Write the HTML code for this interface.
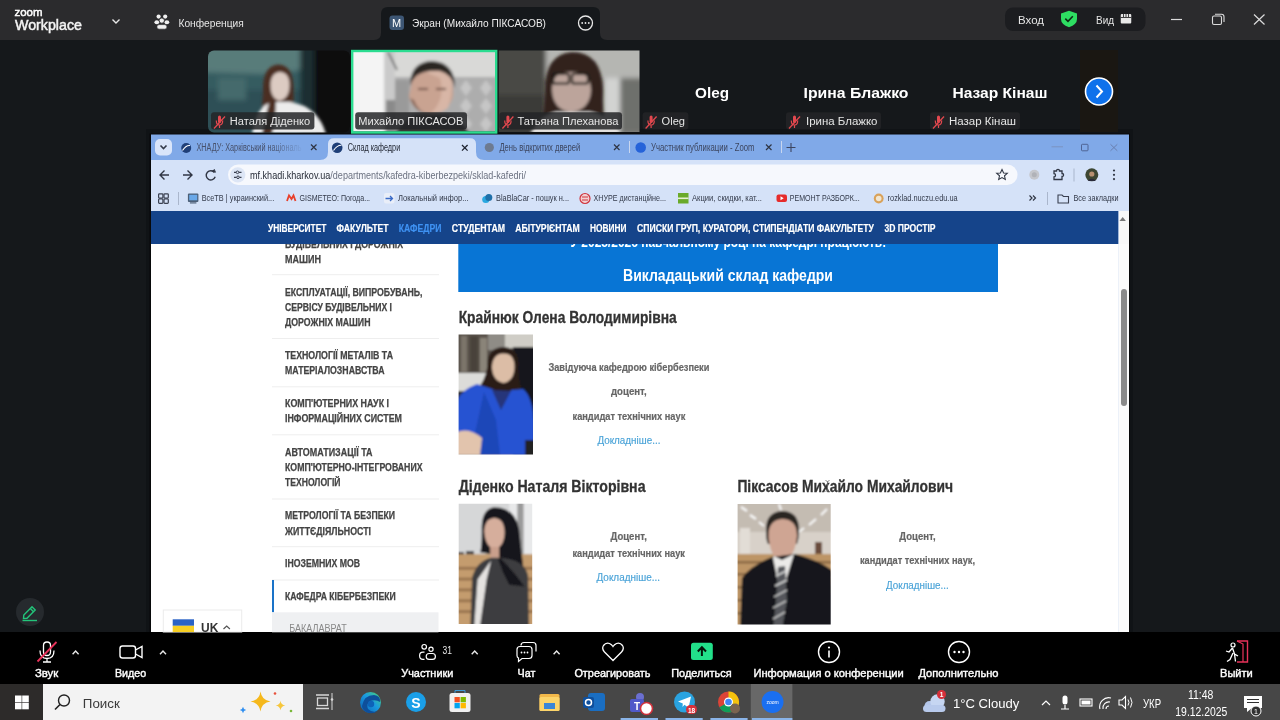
<!DOCTYPE html>
<html><head><meta charset="utf-8"><title>Zoom</title>
<style>html,body{margin:0;padding:0;background:#15181b;overflow:hidden;width:1280px;height:720px}
svg{display:block;will-change:transform}text{font-family:"Liberation Sans",sans-serif}</style></head>
<body><svg width="1280" height="720" viewBox="0 0 1280 720">
<defs>
<linearGradient id="g_t1" x1="0" y1="0" x2="0" y2="1"><stop offset="0" stop-color="#5f8482"/><stop offset="0.5" stop-color="#3b6367"/><stop offset="1" stop-color="#2c4d55"/></linearGradient>
<linearGradient id="g_t1r" x1="0" y1="0" x2="1" y2="0"><stop offset="0" stop-color="#000" stop-opacity="0"/><stop offset="0.6" stop-color="#050505" stop-opacity="1"/></linearGradient>
<linearGradient id="g_t3" x1="0" y1="0" x2="1" y2="0"><stop offset="0" stop-color="#4a4c4a"/><stop offset="0.5" stop-color="#7d7f7e"/><stop offset="1" stop-color="#b5b6b5"/></linearGradient>
<linearGradient id="g_t2" x1="0" y1="0" x2="1" y2="0"><stop offset="0" stop-color="#f2f2f2"/><stop offset="0.22" stop-color="#e9e9e9"/><stop offset="0.3" stop-color="#b5b5b5"/><stop offset="1" stop-color="#9c9c9c"/></linearGradient>
</defs>
<rect x="0" y="0" width="1280" height="40" fill="#2b2b2d" />
<text x="14.5" y="16" font-size="11" font-weight="normal" fill="#ffffff" text-anchor="start" font-family="Liberation Sans" textLength="28" lengthAdjust="spacingAndGlyphs" stroke="#fff" stroke-width="0.45">zoom</text>
<text x="15" y="30.3" font-size="14" font-weight="normal" fill="#f4f4f4" text-anchor="start" font-family="Liberation Sans" textLength="67" lengthAdjust="spacingAndGlyphs" stroke="#f4f4f4" stroke-width="0.45">Workplace</text>
<path d="M112.5 19.5 L116 23 L119.5 19.5" fill="none" stroke="#e8e8e8" stroke-width="1.4" />
<text x="178.5" y="26.9" font-size="11" font-weight="normal" fill="#e6e6e6" text-anchor="start" font-family="Liberation Sans" textLength="65.3" lengthAdjust="spacingAndGlyphs" >Конференция</text>
<circle cx="158.6" cy="16.6" r="2.1" fill="#f0f0f0" />
<circle cx="165.2" cy="16.6" r="2.1" fill="#f0f0f0" />
<ellipse cx="156.8" cy="22.3" rx="2.4" ry="2" fill="#f0f0f0"/><ellipse cx="166.9" cy="22.3" rx="2.4" ry="2" fill="#f0f0f0"/>
<circle cx="161.8" cy="20.6" r="2.6" fill="#f0f0f0" stroke="#2b2b2d" stroke-width="0.8" />
<rect x="156.8" y="24.6" width="10.2" height="4.6" fill="#f0f0f0" rx="2.3" stroke="#2b2b2d" stroke-width="0.7"/>
<path d="M374 40 Q381 40 381 33 L381 14 Q381 7 388 7 L593 7 Q600 7 600 14 L600 33 Q600 40 607 40 Z" fill="#15181b" />
<rect x="389.5" y="15.5" width="14.5" height="14.5" fill="#3d5674" rx="3" />
<text x="396.7" y="27" font-size="11" font-weight="normal" fill="#ffffff" text-anchor="middle" font-family="Liberation Sans" >M</text>
<text x="412" y="27" font-size="11.5" font-weight="normal" fill="#eeeeee" text-anchor="start" font-family="Liberation Sans" textLength="134" lengthAdjust="spacingAndGlyphs" >Экран (Михайло ПІКСАСОВ)</text>
<circle cx="585.5" cy="23" r="7" fill="none" stroke="#e8e8e8" stroke-width="1.3" />
<circle cx="582.2" cy="23" r="0.9" fill="#e8e8e8" />
<circle cx="585.5" cy="23" r="0.9" fill="#e8e8e8" />
<circle cx="588.8" cy="23" r="0.9" fill="#e8e8e8" />
<rect x="1005" y="7.5" width="140.5" height="23.5" fill="#1c1d20" rx="8" />
<text x="1018" y="23.9" font-size="11.5" font-weight="normal" fill="#e6e6e6" text-anchor="start" font-family="Liberation Sans" textLength="26" lengthAdjust="spacingAndGlyphs" >Вход</text>
<path d="M1069 10.8 L1077 13.5 L1077 19 Q1077 24.5 1069 27.2 Q1061 24.5 1061 19 L1061 13.5 Z" fill="#2ede62" />
<path d="M1065.3 18.6 L1068 21.3 L1072.8 16.3" fill="none" stroke="#0d2a14" stroke-width="1.6" />
<text x="1096" y="23.9" font-size="11.5" font-weight="normal" fill="#e6e6e6" text-anchor="start" font-family="Liberation Sans" textLength="18" lengthAdjust="spacingAndGlyphs" >Вид</text>
<rect x="1120.75" y="14" width="10.5" height="9.5" fill="#e8e8e8" rx="1" />
<path d="M1123.5 14 L1123.5 17 M1126 14 L1126 17 M1128.5 14 L1128.5 17 M1120.75 17.5 L1131.25 17.5" fill="none" stroke="#2b2b2d" stroke-width="0.9" />
<path d="M1171 19.5 L1182 19.5" fill="none" stroke="#dcdcdc" stroke-width="1.2" />
<rect x="1212.5" y="16" width="9" height="8.5" fill="none" rx="1.5" stroke="#dcdcdc" stroke-width="1.1"/>
<path d="M1215 14.2 L1221.5 14.2 Q1224 14.2 1224 16.7 L1224 22" fill="none" stroke="#dcdcdc" stroke-width="1.1" />
<path d="M1254 14.5 L1264.5 24.5 M1264.5 14.5 L1254 24.5" fill="none" stroke="#dcdcdc" stroke-width="1.2" />
<rect x="0" y="40" width="1280" height="592" fill="#15181b" />
<rect x="146" y="129" width="987" height="503" fill="#101316" />
<rect x="149.5" y="133.5" width="980.5" height="498.5" fill="#08090a" />
<filter id="bl3" x="-10%" y="-10%" width="120%" height="120%"><feGaussianBlur stdDeviation="1.6"/></filter>
<clipPath id="cp_v1"><rect x="208" y="50.4" width="142" height="82" rx="6"/></clipPath>
<g clip-path="url(#cp_v1)"><g filter="url(#bl2)">
<rect x="200" y="45" width="160" height="95" fill="#355c61" />
<path d="M200 45 L330 45 L318 60 Q300 75 260 74 L200 72 Z" fill="#587c7a" />
<rect x="200" y="90" width="100" height="45" fill="#2d4f56" />
<rect x="218" y="78" width="28" height="22" fill="#446a6c" />
<rect x="312" y="45" width="48" height="95" fill="#0c0908" />
<rect x="300" y="45" width="14" height="95" fill="#1d2d30" />
</g></g>
<g clip-path="url(#cp_v1)"><g filter="url(#bl3)">
<path d="M278 64.5 Q262 66 263 92 Q262 116 258 133 L300 133 Q293 112 293.5 90 Q294 65 278 64.5 Z" fill="#4c2f24" />
<path d="M279.5 72 Q270.5 73 270.5 86 Q271 99 279.5 101 Q289 99 289.5 86 Q289.5 72 279.5 72 Z" fill="#dccbc2" />
<path d="M252 134 Q256 106 272 102 L290 102 Q318 106 326 134 Z" fill="#ececec" />
<path d="M262 134 Q266 112 270 100 L276 100 Q276 118 272 134 Z" fill="#4c2f24" />
</g></g>
<clipPath id="cp_v2"><rect x="352.2" y="51" width="144" height="80.5"/></clipPath>
<g clip-path="url(#cp_v2)"><g filter="url(#bl3)">
<rect x="345" y="45" width="160" height="95" fill="#adadad" />
<rect x="345" y="45" width="160" height="32" fill="#d9d9d7" />
<rect x="345" y="45" width="40" height="95" fill="#f4f4f4" />
<rect x="384" y="45" width="11" height="95" fill="#cacaca" />
<rect x="386" y="100" width="10" height="35" fill="#8a8a8a" />
<path d="M388 52 L397 70" fill="none" stroke="#3a3a3a" stroke-width="1.5" />
<path d="M466 80 L472 88 L466 96 L460 88 Z" fill="#c6c6c6" />
<path d="M466 98 L472 106 L466 114 L460 106 Z" fill="#c6c6c6" />
<path d="M466 116 L472 124 L466 132 L460 124 Z" fill="#c6c6c6" />
<path d="M486 80 L492 88 L486 96 L480 88 Z" fill="#c6c6c6" />
<path d="M486 98 L492 106 L486 114 L480 106 Z" fill="#c6c6c6" />
<path d="M486 116 L492 124 L486 132 L480 124 Z" fill="#c6c6c6" />
<rect x="395" y="80" width="14" height="55" fill="#9a9a9a" />
<path d="M431 63 Q414 64 412 82 L409 96 Q411 110 430 114 Q450 111 453 96 Q455 64 431 63 Z" fill="#c9a391" />
<path d="M420 70 Q438 66 452 78 Q452 96 448 108 Q440 114 430 114 Q446 100 440 78 Z" fill="#d8b6a6" />
<path d="M410 98 Q414 112 430 115 Q418 112 414 100 Z" fill="#8a6a5c" />
<path d="M410 86 Q410 62 432 61 Q455 62 455 88 Q452 74 440 71 Q424 70 416 76 Q412 80 410 86 Z" fill="#2a2524" />
<path d="M418 89 L428 89 M436 89 L446 89" fill="none" stroke="#6a4c40" stroke-width="2.2" />
<path d="M395 134 Q402 120 416 114 L448 114 Q462 120 470 134 Z" fill="#3a3836" />
</g></g>
<rect x="352.2" y="51" width="144" height="81.5" fill="none" stroke="#2bdc90" stroke-width="2.4"/>
<clipPath id="cp_v3"><rect x="498.8" y="50.4" width="140.7" height="81.6"/></clipPath>
<g clip-path="url(#cp_v3)"><g filter="url(#bl2)">
<rect x="490" y="45" width="160" height="95" fill="#8c8d8a" />
<rect x="490" y="45" width="160" height="33" fill="#b5b6b2" />
<rect x="490" y="45" width="56" height="95" fill="#4a4a45" />
<rect x="490" y="95" width="56" height="40" fill="#3b3b37" />
<rect x="604" y="78" width="16" height="55" fill="#d2d3d1" />
<rect x="620" y="78" width="25" height="55" fill="#6e6f6c" />
</g></g>
<g clip-path="url(#cp_v3)"><g filter="url(#bl3)">
<path d="M572 52 Q545 54 545 90 Q544 112 540 134 L606 134 Q602 112 603 90 Q602 52 572 52 Z" fill="#30241f" />
<path d="M571 69.5 Q552 71 552 90 Q553 110 571 112 Q590 110 591 90 Q590 69.5 571 69.5 Z" fill="#bca49b" />
<path d="M550 80 Q552 66 571 65 Q592 66 593 80 Q582 72 571 72 Q560 72 550 80 Z" fill="#30241f" />
<rect x="553" y="74" width="16" height="9.5" fill="none" rx="2" stroke="#141210" stroke-width="2.2"/>
<rect x="572" y="74" width="16" height="9.5" fill="none" rx="2" stroke="#141210" stroke-width="2.2"/>
<path d="M530 134 Q540 116 556 112 L590 112 Q610 116 620 134 Z" fill="#e2e0de" />
</g></g>
<text x="712" y="97.5" font-size="15" font-weight="bold" fill="#ffffff" text-anchor="middle" font-family="Liberation Sans" textLength="34" lengthAdjust="spacingAndGlyphs" >Oleg</text>
<text x="856" y="97.5" font-size="15" font-weight="bold" fill="#ffffff" text-anchor="middle" font-family="Liberation Sans" textLength="105" lengthAdjust="spacingAndGlyphs" >Ірина Блажко</text>
<text x="1000" y="97.5" font-size="15" font-weight="bold" fill="#ffffff" text-anchor="middle" font-family="Liberation Sans" textLength="95" lengthAdjust="spacingAndGlyphs" >Назар Кінаш</text>
<rect x="1080" y="50" width="38" height="82" fill="#1a1712" />
<circle cx="1099" cy="91.5" r="13.5" fill="#0e71eb" stroke="#ffffff" stroke-width="1.6" />
<path d="M1096.5 85.5 L1102 91.5 L1096.5 97.5" fill="none" stroke="#ffffff" stroke-width="2" />
<rect x="151" y="134.5" width="978" height="497.5" fill="#80a9e8" />
<rect x="151" y="160" width="978" height="51" fill="#d5e2f8" />
<rect x="151" y="211" width="967.5" height="33" fill="#15448a" />
<rect x="151" y="244" width="967.5" height="388" fill="#ffffff" />
<rect x="1118.5" y="211" width="10.5" height="421" fill="#f8f8f8" />
<rect x="0" y="632" width="1280" height="52" fill="#000000" />
<rect x="0" y="684" width="1280" height="36" fill="#474747" />
<rect x="0" y="684" width="43" height="36" fill="#2d2b2a" />
<rect x="43" y="684" width="260" height="36" fill="#f3f3f3" />
<rect x="155" y="139" width="17" height="16.5" fill="#d9e5fa" rx="5" />
<path d="M160.5 145.5 L163.5 148.5 L166.5 145.5" fill="none" stroke="#333a4a" stroke-width="1.6" />
<circle cx="186.2" cy="148" r="5" fill="#1f3f78" />
<path d="M182.5 150.5 Q186 145 190 145.5" fill="none" stroke="#ffffff" stroke-width="1.1" />
<text x="196.5" y="151" font-size="10" font-weight="normal" fill="#46506a" text-anchor="start" font-family="Liberation Sans" textLength="105" lengthAdjust="spacingAndGlyphs" >ХНАДУ: Харківський національ</text>
<linearGradient id="g_fade" x1="0" y1="0" x2="1" y2="0"><stop offset="0" stop-color="#80a9e8" stop-opacity="0"/><stop offset="1" stop-color="#80a9e8" stop-opacity="1"/></linearGradient>
<rect x="270" y="138" width="34" height="20" fill="url(#g_fade)" />
<path d="M311 144.5 L316.5 150 M316.5 144.5 L311 150" fill="none" stroke="#2e3544" stroke-width="1.2" />
<path d="M320 160 Q328 160 328 152 L328 144 Q328 138.2 334 138.2 L470 138.2 Q476 138.2 476 144 L476 152 Q476 160 484 160 Z" fill="#d5e2f8" />
<circle cx="337.2" cy="147.7" r="5.3" fill="#1f3f78" />
<path d="M333.5 150.5 Q337 145 341.5 145.2" fill="none" stroke="#ffffff" stroke-width="1.1" />
<text x="347.7" y="151.2" font-size="10" font-weight="normal" fill="#1f2430" text-anchor="start" font-family="Liberation Sans" textLength="52.5" lengthAdjust="spacingAndGlyphs" >Склад кафедри</text>
<path d="M462 145 L467.6 150.6 M467.6 145 L462 150.6" fill="none" stroke="#1f2430" stroke-width="1.3" />
<circle cx="489.3" cy="147.5" r="4.6" fill="#6d7a90" />
<text x="499.4" y="151" font-size="10" font-weight="normal" fill="#3c4660" text-anchor="start" font-family="Liberation Sans" textLength="81" lengthAdjust="spacingAndGlyphs" >День відкритих дверей</text>
<path d="M614 144.5 L619.5 150 M619.5 144.5 L614 150" fill="none" stroke="#2e3544" stroke-width="1.2" />
<rect x="629" y="141" width="1" height="12" fill="#c8d6ef" />
<circle cx="640.7" cy="147.5" r="5.3" fill="#2563d9" />
<text x="651" y="151" font-size="10" font-weight="normal" fill="#3c4660" text-anchor="start" font-family="Liberation Sans" textLength="103.5" lengthAdjust="spacingAndGlyphs" >Участник публикации - Zoom</text>
<path d="M766 144.5 L771.5 150 M771.5 144.5 L766 150" fill="none" stroke="#2e3544" stroke-width="1.2" />
<rect x="781" y="141" width="1" height="12" fill="#c8d6ef" />
<path d="M791 143 L791 152 M786.5 147.5 L795.5 147.5" fill="none" stroke="#3c4660" stroke-width="1.1" />
<path d="M1051.5 146.8 L1063 146.8" fill="none" stroke="#7b93c0" stroke-width="1" />
<rect x="1081.5" y="144.3" width="6.5" height="6.5" fill="none" rx="0.8" stroke="#4f6494" stroke-width="1"/>
<path d="M1110.5 144.3 L1117.3 150.8 M1117.3 144.3 L1110.5 150.8" fill="none" stroke="#6a80b0" stroke-width="1" />
<path d="M160 175 L169 175 M164.5 170.5 L160 175 L164.5 179.5" fill="none" stroke="#303644" stroke-width="1.4" />
<path d="M183 175 L192 175 M187.5 170.5 L192 175 L187.5 179.5" fill="none" stroke="#303644" stroke-width="1.4" />
<path d="M214.5 172.5 A4.6 4.6 0 1 0 215.2 176.8" fill="none" stroke="#303644" stroke-width="1.4" />
<path d="M212.2 170.8 L215.5 172.3 L214.3 169.2" fill="#303644" stroke="#303644" stroke-width="0.8" />
<rect x="228" y="164.5" width="789.5" height="20.5" fill="#f6f8fd" rx="10.25" />
<circle cx="237.8" cy="174.8" r="7.6" fill="#dde6f6" />
<path d="M234 172.3 L236 172.3 M239 172.3 L241.5 172.3 M234 177.3 L236.5 177.3 M239.5 177.3 L241.5 177.3" fill="none" stroke="#3a4050" stroke-width="1.2" />
<circle cx="237.5" cy="172.3" r="1.3" fill="none" stroke="#3a4050" stroke-width="1" />
<circle cx="238" cy="177.3" r="1.3" fill="none" stroke="#3a4050" stroke-width="1" />
<text x="250" y="178.8" font-size="10.5" font-family="Liberation Sans" textLength="276" lengthAdjust="spacingAndGlyphs"><tspan fill="#1f2430">mf.khadi.kharkov.ua</tspan><tspan fill="#6b7180">/departments/kafedra-kiberbezpeki/sklad-kafedri/</tspan></text>
<path d="M1002 169.5 L1003.6 173 L1007.3 173.3 L1004.5 175.8 L1005.3 179.5 L1002 177.6 L998.7 179.5 L999.5 175.8 L996.7 173.3 L1000.4 173 Z" fill="none" stroke="#303644" stroke-width="1.1" />
<circle cx="1034.3" cy="174.8" r="5" fill="#c4c6cc" />
<circle cx="1034.3" cy="174.8" r="2.5" fill="#b0b2b8" />
<path d="M1054 171 L1056.5 171 Q1056.5 169.3 1058 169.3 Q1059.5 169.3 1059.5 171 L1062 171 L1062 173.5 Q1063.6 173.5 1063.6 175 Q1063.6 176.5 1062 176.5 L1062 179.5 L1054 179.5 L1054 177 Q1055.5 177 1055.5 175.3 Q1055.5 173.6 1054 173.6 Z" fill="none" stroke="#303644" stroke-width="1.3" />
<rect x="1073.5" y="168.5" width="1" height="13" fill="#aab6cc" />
<circle cx="1091.8" cy="174.8" r="6.5" fill="#3d4632" />
<circle cx="1091.8" cy="174" r="2.6" fill="#b89070" />
<path d="M1087.5 181 Q1091.8 176.5 1096 181" fill="#2a2a3a" />
<circle cx="1114" cy="170.5" r="1.1" fill="#303644" />
<circle cx="1114" cy="174.8" r="1.1" fill="#303644" />
<circle cx="1114" cy="179.1" r="1.1" fill="#303644" />
<rect x="158.6" y="193.8" width="4.3" height="4.3" fill="none" rx="0.8" stroke="#3a4050" stroke-width="1.2"/>
<rect x="164" y="193.8" width="4.3" height="4.3" fill="none" rx="0.8" stroke="#3a4050" stroke-width="1.2"/>
<rect x="158.6" y="199" width="4.3" height="4.3" fill="none" rx="0.8" stroke="#3a4050" stroke-width="1.2"/>
<rect x="164" y="199" width="4.3" height="4.3" fill="none" rx="0.8" stroke="#3a4050" stroke-width="1.2"/>
<rect x="178" y="192" width="1" height="13" fill="#aab6cc" />
<rect x="187.9" y="193.5" width="10.5" height="8.5" fill="#4d6078" rx="1" />
<rect x="189.20000000000002" y="194.8" width="8" height="5.5" fill="#6aa8e8" />
<rect x="189.9" y="202.3" width="6.5" height="1.2" fill="#4d6078" />
<text x="201.7" y="201.3" font-size="9.5" font-weight="normal" fill="#333a4a" text-anchor="start" font-family="Liberation Sans" textLength="72.5" lengthAdjust="spacingAndGlyphs" >ВсеТВ | украинский...</text>
<path d="M287 201 L289 195.5 L291.5 199 L293.5 195.5 L295.5 201" fill="none" stroke="#e8402b" stroke-width="1.8" />
<text x="299.6" y="201.3" font-size="9.5" font-weight="normal" fill="#333a4a" text-anchor="start" font-family="Liberation Sans" textLength="70.5" lengthAdjust="spacingAndGlyphs" >GISMETEO: Погода...</text>
<rect x="384" y="193" width="10.5" height="10.5" fill="#e9eef8" rx="2" />
<path d="M385.5 198.5 L392.5 198.5 M390 196 L392.5 198.5 L390 201" fill="none" stroke="#3a6bc8" stroke-width="1.3" />
<text x="398" y="201.3" font-size="9.5" font-weight="normal" fill="#333a4a" text-anchor="start" font-family="Liberation Sans" textLength="70.5" lengthAdjust="spacingAndGlyphs" >Локальный инфор...</text>
<circle cx="485.8" cy="199.5" r="3.6" fill="#2aa8e0" />
<circle cx="488.8" cy="197.5" r="3.5" fill="#1f6fa8" />
<text x="496" y="201.3" font-size="9.5" font-weight="normal" fill="#333a4a" text-anchor="start" font-family="Liberation Sans" textLength="73" lengthAdjust="spacingAndGlyphs" >BlaBlaCar - пошук н...</text>
<circle cx="585" cy="198.5" r="5" fill="#f3d2d4" stroke="#d0353f" stroke-width="1.2" />
<path d="M582 197 L588 197 M582 200 L588 200" fill="none" stroke="#d0353f" stroke-width="1" />
<text x="593.5" y="201.3" font-size="9.5" font-weight="normal" fill="#333a4a" text-anchor="start" font-family="Liberation Sans" textLength="72.5" lengthAdjust="spacingAndGlyphs" >ХНУРЕ дистанційне...</text>
<rect x="678" y="193" width="10.5" height="10.5" fill="#6aaa2a" />
<rect x="678" y="197.5" width="10.5" height="1.6" fill="#e6f0d0" />
<text x="692" y="201.3" font-size="9.5" font-weight="normal" fill="#333a4a" text-anchor="start" font-family="Liberation Sans" textLength="70" lengthAdjust="spacingAndGlyphs" >Акции, скидки, кат...</text>
<rect x="776.5" y="194.5" width="10.5" height="7.5" fill="#e62b2b" rx="2" />
<path d="M780.5 196.3 L783.7 198.25 L780.5 200.2 Z" fill="#ffffff" />
<text x="789.8" y="201.3" font-size="9.5" font-weight="normal" fill="#333a4a" text-anchor="start" font-family="Liberation Sans" textLength="70" lengthAdjust="spacingAndGlyphs" >РЕМОНТ РАЗБОРК...</text>
<circle cx="878.7" cy="198.5" r="4.9" fill="#d9a25a" />
<circle cx="878.7" cy="198.5" r="2.8" fill="#f2e6d0" />
<text x="887.6" y="201.3" font-size="9.5" font-weight="normal" fill="#333a4a" text-anchor="start" font-family="Liberation Sans" textLength="70" lengthAdjust="spacingAndGlyphs" >rozklad.nuczu.edu.ua</text>
<path d="M1029.5 195.5 L1032 198 L1029.5 200.5 M1033 195.5 L1035.5 198 L1033 200.5" fill="none" stroke="#303644" stroke-width="1.2" />
<rect x="1047" y="192" width="1" height="13" fill="#aab6cc" />
<path d="M1058 195 L1062 195 L1063.5 196.5 L1068.5 196.5 L1068.5 203 L1058 203 Z" fill="none" stroke="#3a4050" stroke-width="1.1" />
<text x="1073.5" y="201.3" font-size="9.5" font-weight="normal" fill="#333a4a" text-anchor="start" font-family="Liberation Sans" textLength="45" lengthAdjust="spacingAndGlyphs" >Все закладки</text>
<text x="268" y="232.4" font-size="11.3" font-weight="bold" fill="#ffffff" text-anchor="start" font-family="Liberation Sans" textLength="58.4" lengthAdjust="spacingAndGlyphs" stroke="#ffffff" stroke-width="0.2">УНІВЕРСИТЕТ</text>
<text x="336.6" y="232.4" font-size="11.3" font-weight="bold" fill="#ffffff" text-anchor="start" font-family="Liberation Sans" textLength="52" lengthAdjust="spacingAndGlyphs" stroke="#ffffff" stroke-width="0.2">ФАКУЛЬТЕТ</text>
<text x="398.7" y="232.4" font-size="11.3" font-weight="bold" fill="#3f92f2" text-anchor="start" font-family="Liberation Sans" textLength="42.8" lengthAdjust="spacingAndGlyphs" stroke="#3f92f2" stroke-width="0.2">КАФЕДРИ</text>
<text x="451.8" y="232.4" font-size="11.3" font-weight="bold" fill="#ffffff" text-anchor="start" font-family="Liberation Sans" textLength="53.2" lengthAdjust="spacingAndGlyphs" stroke="#ffffff" stroke-width="0.2">СТУДЕНТАМ</text>
<text x="515.2" y="232.4" font-size="11.3" font-weight="bold" fill="#ffffff" text-anchor="start" font-family="Liberation Sans" textLength="64.6" lengthAdjust="spacingAndGlyphs" stroke="#ffffff" stroke-width="0.2">АБІТУРІЄНТАМ</text>
<text x="590" y="232.4" font-size="11.3" font-weight="bold" fill="#ffffff" text-anchor="start" font-family="Liberation Sans" textLength="36.6" lengthAdjust="spacingAndGlyphs" stroke="#ffffff" stroke-width="0.2">НОВИНИ</text>
<text x="637" y="232.4" font-size="11.3" font-weight="bold" fill="#ffffff" text-anchor="start" font-family="Liberation Sans" textLength="236.8" lengthAdjust="spacingAndGlyphs" stroke="#ffffff" stroke-width="0.2">СПИСКИ ГРУП, КУРАТОРИ, СТИПЕНДІАТИ ФАКУЛЬТЕТУ</text>
<text x="884.5" y="232.4" font-size="11.3" font-weight="bold" fill="#ffffff" text-anchor="start" font-family="Liberation Sans" textLength="51" lengthAdjust="spacingAndGlyphs" stroke="#ffffff" stroke-width="0.2">3D ПРОСТІР</text>
<rect x="458.3" y="244" width="539.7" height="48" fill="#0875d5" />
<clipPath id="cp_hdr"><rect x="458" y="244" width="540" height="10"/></clipPath>
<text x="728.4" y="247.2" font-size="15.5" font-weight="bold" fill="#ffffff" text-anchor="middle" font-family="Liberation Sans" textLength="315.6" lengthAdjust="spacingAndGlyphs" clip-path="url(#cp_hdr)">У 2025/2026 навчальному році на кафедрі працюють:</text>
<text x="623" y="280.8" font-size="16" font-weight="bold" fill="#ffffff" text-anchor="start" font-family="Liberation Sans" textLength="210" lengthAdjust="spacingAndGlyphs" >Викладацький склад кафедри</text>
<clipPath id="cp_side"><rect x="150" y="244" width="968" height="388"/></clipPath>
<g clip-path="url(#cp_side)">
<text x="285" y="247.6" font-size="10.3" font-weight="bold" fill="#444444" text-anchor="start" font-family="Liberation Sans" textLength="118" lengthAdjust="spacingAndGlyphs" stroke="#444" stroke-width="0.25">БУДІВЕЛЬНИХ І ДОРОЖНІХ</text>
<text x="285" y="262.7" font-size="10.3" font-weight="bold" fill="#444444" text-anchor="start" font-family="Liberation Sans" textLength="36" lengthAdjust="spacingAndGlyphs" stroke="#444" stroke-width="0.25">МАШИН</text>
<text x="285" y="295.5" font-size="10.3" font-weight="bold" fill="#444444" text-anchor="start" font-family="Liberation Sans" textLength="137.5" lengthAdjust="spacingAndGlyphs" stroke="#444" stroke-width="0.25">ЕКСПЛУАТАЦІЇ, ВИПРОБУВАНЬ,</text>
<text x="285" y="310.5" font-size="10.3" font-weight="bold" fill="#444444" text-anchor="start" font-family="Liberation Sans" textLength="107" lengthAdjust="spacingAndGlyphs" stroke="#444" stroke-width="0.25">СЕРВІСУ БУДІВЕЛЬНИХ І</text>
<text x="285" y="326" font-size="10.3" font-weight="bold" fill="#444444" text-anchor="start" font-family="Liberation Sans" textLength="85.5" lengthAdjust="spacingAndGlyphs" stroke="#444" stroke-width="0.25">ДОРОЖНІХ МАШИН</text>
<text x="285" y="359" font-size="10.3" font-weight="bold" fill="#444444" text-anchor="start" font-family="Liberation Sans" textLength="108" lengthAdjust="spacingAndGlyphs" stroke="#444" stroke-width="0.25">ТЕХНОЛОГІЇ МЕТАЛІВ ТА</text>
<text x="285" y="374" font-size="10.3" font-weight="bold" fill="#444444" text-anchor="start" font-family="Liberation Sans" textLength="99.5" lengthAdjust="spacingAndGlyphs" stroke="#444" stroke-width="0.25">МАТЕРІАЛОЗНАВСТВА</text>
<text x="285" y="407" font-size="10.3" font-weight="bold" fill="#444444" text-anchor="start" font-family="Liberation Sans" textLength="104" lengthAdjust="spacingAndGlyphs" stroke="#444" stroke-width="0.25">КОМП&#x27;ЮТЕРНИХ НАУК І</text>
<text x="285" y="422" font-size="10.3" font-weight="bold" fill="#444444" text-anchor="start" font-family="Liberation Sans" textLength="117" lengthAdjust="spacingAndGlyphs" stroke="#444" stroke-width="0.25">ІНФОРМАЦІЙНИХ СИСТЕМ</text>
<text x="285" y="455.5" font-size="10.3" font-weight="bold" fill="#444444" text-anchor="start" font-family="Liberation Sans" textLength="87.5" lengthAdjust="spacingAndGlyphs" stroke="#444" stroke-width="0.25">АВТОМАТИЗАЦІЇ ТА</text>
<text x="285" y="470.7" font-size="10.3" font-weight="bold" fill="#444444" text-anchor="start" font-family="Liberation Sans" textLength="137.5" lengthAdjust="spacingAndGlyphs" stroke="#444" stroke-width="0.25">КОМП&#x27;ЮТЕРНО-ІНТЕГРОВАНИХ</text>
<text x="285" y="485.7" font-size="10.3" font-weight="bold" fill="#444444" text-anchor="start" font-family="Liberation Sans" textLength="55.5" lengthAdjust="spacingAndGlyphs" stroke="#444" stroke-width="0.25">ТЕХНОЛОГІЙ</text>
<text x="285" y="519" font-size="10.3" font-weight="bold" fill="#444444" text-anchor="start" font-family="Liberation Sans" textLength="110" lengthAdjust="spacingAndGlyphs" stroke="#444" stroke-width="0.25">МЕТРОЛОГІЇ ТА БЕЗПЕКИ</text>
<text x="285" y="534.7" font-size="10.3" font-weight="bold" fill="#444444" text-anchor="start" font-family="Liberation Sans" textLength="86" lengthAdjust="spacingAndGlyphs" stroke="#444" stroke-width="0.25">ЖИТТЄДІЯЛЬНОСТІ</text>
<text x="285" y="567.3" font-size="10.3" font-weight="bold" fill="#444444" text-anchor="start" font-family="Liberation Sans" textLength="75" lengthAdjust="spacingAndGlyphs" stroke="#444" stroke-width="0.25">ІНОЗЕМНИХ МОВ</text>
<text x="285" y="600" font-size="10.3" font-weight="bold" fill="#444444" text-anchor="start" font-family="Liberation Sans" textLength="110.7" lengthAdjust="spacingAndGlyphs" stroke="#444" stroke-width="0.25">КАФЕДРА КІБЕРБЕЗПЕКИ</text>
</g>
<rect x="272" y="274.2" width="167" height="1" fill="#eeeeee" />
<rect x="272" y="338.0" width="167" height="1" fill="#eeeeee" />
<rect x="272" y="386.3" width="167" height="1" fill="#eeeeee" />
<rect x="272" y="434.3" width="167" height="1" fill="#eeeeee" />
<rect x="272" y="498.5" width="167" height="1" fill="#eeeeee" />
<rect x="272" y="546.2" width="167" height="1" fill="#eeeeee" />
<rect x="272" y="579.5" width="167" height="1" fill="#eeeeee" />
<rect x="272" y="580" width="2" height="32.3" fill="#1a73c8" />
<rect x="272" y="612.3" width="166.5" height="20" fill="#eff0f2" />
<text x="289.3" y="632" font-size="11" font-weight="normal" fill="#888888" text-anchor="start" font-family="Liberation Sans" textLength="57.4" lengthAdjust="spacingAndGlyphs" >БАКАЛАВРАТ</text>
<rect x="163.3" y="610" width="78.4" height="22" fill="#ffffff" stroke="#ececec" stroke-width="1"/>
<rect x="172.7" y="619.3" width="21.3" height="6.5" fill="#2a63c6" />
<rect x="172.7" y="625.8" width="21.3" height="6.2" fill="#f7cf23" />
<text x="201" y="632" font-size="13" font-weight="bold" fill="#333333" text-anchor="start" font-family="Liberation Sans" textLength="17.3" lengthAdjust="spacingAndGlyphs" >UK</text>
<path d="M223.5 629 L226.7 626 L229.9 629" fill="none" stroke="#555" stroke-width="1.2" />
<text x="458.7" y="323.2" font-size="16.3" font-weight="bold" fill="#333333" text-anchor="start" font-family="Liberation Sans" textLength="218" lengthAdjust="spacingAndGlyphs" stroke="#333" stroke-width="0.3">Крайнюк Олена Володимирівна</text>
<text x="548.4" y="370.5" font-size="10.5" font-weight="bold" fill="#666666" text-anchor="start" font-family="Liberation Sans" textLength="161" lengthAdjust="spacingAndGlyphs" stroke="#666" stroke-width="0.2">Завідуюча кафедрою кібербезпеки</text>
<text x="611" y="395.4" font-size="10.5" font-weight="bold" fill="#666666" text-anchor="start" font-family="Liberation Sans" textLength="35.8" lengthAdjust="spacingAndGlyphs" stroke="#666" stroke-width="0.2">доцент,</text>
<text x="572.5" y="419.5" font-size="10.5" font-weight="bold" fill="#666666" text-anchor="start" font-family="Liberation Sans" textLength="112.8" lengthAdjust="spacingAndGlyphs" stroke="#666" stroke-width="0.2">кандидат технічних наук</text>
<text x="597.4" y="444.3" font-size="10.5" font-weight="normal" fill="#4aa3d8" text-anchor="start" font-family="Liberation Sans" textLength="63" lengthAdjust="spacingAndGlyphs" stroke="#4aa3d8" stroke-width="0.15">Докладніше...</text>
<text x="458.7" y="492" font-size="16.3" font-weight="bold" fill="#333333" text-anchor="start" font-family="Liberation Sans" textLength="186.8" lengthAdjust="spacingAndGlyphs" stroke="#333" stroke-width="0.3">Діденко Наталя Вікторівна</text>
<text x="610.5" y="540.1" font-size="10.5" font-weight="bold" fill="#666666" text-anchor="start" font-family="Liberation Sans" textLength="36.3" lengthAdjust="spacingAndGlyphs" stroke="#666" stroke-width="0.2">Доцент,</text>
<text x="572.5" y="556.5" font-size="10.5" font-weight="bold" fill="#666666" text-anchor="start" font-family="Liberation Sans" textLength="112.5" lengthAdjust="spacingAndGlyphs" stroke="#666" stroke-width="0.2">кандидат технічних наук</text>
<text x="596.5" y="580.7" font-size="10.5" font-weight="normal" fill="#4aa3d8" text-anchor="start" font-family="Liberation Sans" textLength="63.5" lengthAdjust="spacingAndGlyphs" stroke="#4aa3d8" stroke-width="0.15">Докладніше...</text>
<text x="737.4" y="492" font-size="16.3" font-weight="bold" fill="#333333" text-anchor="start" font-family="Liberation Sans" textLength="215.6" lengthAdjust="spacingAndGlyphs" stroke="#333" stroke-width="0.3">Піксасов Михайло Михайлович</text>
<path d="M825.5 480.5 L827.5 481.5 L829.5 480.5 M827.5 481.5 L827.5 490.5 M825.5 491.5 L827.5 490.5 L829.5 491.5" fill="none" stroke="#666" stroke-width="0.8" />
<text x="899.3" y="540.1" font-size="10.5" font-weight="bold" fill="#666666" text-anchor="start" font-family="Liberation Sans" textLength="36.3" lengthAdjust="spacingAndGlyphs" stroke="#666" stroke-width="0.2">Доцент,</text>
<text x="859.9" y="564.1" font-size="10.5" font-weight="bold" fill="#666666" text-anchor="start" font-family="Liberation Sans" textLength="115.1" lengthAdjust="spacingAndGlyphs" stroke="#666" stroke-width="0.2">кандидат технічних наук,</text>
<text x="886" y="589" font-size="10.5" font-weight="normal" fill="#4aa3d8" text-anchor="start" font-family="Liberation Sans" textLength="62.7" lengthAdjust="spacingAndGlyphs" stroke="#4aa3d8" stroke-width="0.15">Докладніше...</text>
<rect x="1118.5" y="244" width="10.5" height="388" fill="#fbfbfb" />
<path d="M1119.5 221 L1122.7 217 L1125.9 221 Z" fill="#777" />
<rect x="1121" y="289" width="6" height="117" fill="#8a8a8a" rx="3" />
<filter id="bl1" x="-10%" y="-10%" width="120%" height="120%"><feGaussianBlur stdDeviation="1.2"/></filter>
<filter id="bl2" x="-10%" y="-10%" width="120%" height="120%"><feGaussianBlur stdDeviation="2.5"/></filter>
<clipPath id="cp_p1"><rect x="458.6" y="334.5" width="74.4" height="120"/></clipPath>
<g clip-path="url(#cp_p1)"><g filter="url(#bl1)">
<rect x="450" y="325" width="95" height="140" fill="#5f5a55" />
<rect x="452" y="330" width="38" height="44" fill="#5a534b" />
<rect x="461" y="336" width="6" height="36" fill="#7b746a" />
<rect x="470" y="336" width="8" height="36" fill="#4a433b" />
<rect x="480" y="338" width="7" height="34" fill="#8a8479" />
<rect x="488" y="330" width="22" height="20" fill="#8f8c86" />
<rect x="505" y="330" width="35" height="18" fill="#cfcdc6" />
<rect x="455" y="373" width="33" height="18" fill="#dcdcd9" />
<rect x="455" y="391" width="25" height="60" fill="#333335" />
<rect x="513" y="347" width="25" height="115" fill="#19191b" />
<path d="M502.8 347.1 Q486.6 348.1 487.5 366.1 Q484.8 382.3 475.8 391.4 L491.1 398.6 L514.6 398.6 L521.8 391.4 Q517.3 376.9 518.2 364.3 Q518.2 347.1 502.8 347.1 Z" fill="#2a1f19" />
<path d="M503.5 353.5 Q492 354 492 368 Q493 381 503.5 383 Q514 381 514.5 367 Q514.5 353.5 503.5 353.5 Z" fill="#dcbda6" />
<path d="M455 455 L455 405 Q460 390 477 384 L492 389 Q503 396 512 390 L523 389 Q532 396 534 420 L534 455 Z" fill="#2553d2" />
<path d="M484 392 L496 420 L500 455 L470 455 Q478 420 484 392 Z" fill="#1f47b8" />
<path d="M492 390 L501 410 L511 391 Z" fill="#25357a" />
<path d="M455 433 Q468 426 482 438 L480 455 L455 455 Z" fill="#e2c4ad" />
<rect x="525" y="440" width="12" height="18" fill="#202022" />
</g></g>
<clipPath id="cp_p2"><rect x="458.7" y="503.7" width="73.5" height="120.3"/></clipPath>
<g clip-path="url(#cp_p2)"><g filter="url(#bl1)">
<rect x="450" y="495" width="95" height="140" fill="#d6d7d8" />
<rect x="509.2" y="495" width="40" height="70" fill="#e8e9ea" />
<rect x="517.3" y="495" width="6.3" height="65" fill="#9a9a9a" />
<rect x="450" y="552" width="14" height="6" fill="#3a3d44" />
<rect x="466" y="551" width="8" height="7" fill="#3a3d44" />
<rect x="450" y="554.2" width="95" height="80" fill="#c49c6e" />
<rect x="450" y="566.8" width="95" height="3" fill="#9a7550" />
<rect x="450" y="577.6" width="95" height="3" fill="#9a7550" />
<rect x="450" y="588.4" width="95" height="3" fill="#9a7550" />
<rect x="450" y="599.3" width="95" height="3" fill="#9a7550" />
<rect x="450" y="610.1" width="95" height="3" fill="#9a7550" />
<path d="M493.8 507.2 Q482.1 509.0 481.7 527.1 Q482.1 543.3 480.3 552.3 L491.1 554.2 L500.1 557.8 Q514.6 575.8 525.4 586.6 Q521.8 554.2 519.1 528.9 Q514.6 507.2 493.8 507.2 Z" fill="#16151a" />
<path d="M493.8 518.1 Q484.8 519.0 484.2 531.6 Q485.7 547.8 494.7 549.1 Q504.1 546.9 504.6 532.5 Q504.1 518.1 493.8 518.1 Z" fill="#d6ae9c" />
<rect x="490.2" y="546.9" width="9.0" height="12.6" fill="#c99f8c" />
<path d="M470.3 630 L472.1 577.6 Q476.7 561.4 491.1 557.8 L500.1 557.8 Q525.4 559.6 528.1 575.8 L529.0 630 Z" fill="#3c3c3f" />
<path d="M474.0 630 L477.6 579.4 L491.1 560.5 L486.6 579.4 L479.4 630 Z" fill="#e4e2e0" />
<path d="M500.1 557.8 Q514.6 572.2 524.5 586.6 L509.2 584.8 Q501.9 572.2 498.3 559.6 Z" fill="#16151a" />
</g></g>
<clipPath id="cp_p3"><rect x="737.6" y="504" width="93.1" height="120.5"/></clipPath>
<g clip-path="url(#cp_p3)"><g filter="url(#bl1)">
<rect x="730" y="495" width="110" height="140" fill="#d3ccc4" />
<rect x="730" y="500" width="110" height="33" fill="#c4bcb2" />
<path d="M741 507 L747 511 M750 515 L756 519 M759 522 L764 526 M779 504 L781 510 M827 509 L821 515 M816 519 L809 525 M804 528 L799 532" fill="none" stroke="#f8f8f8" stroke-width="2.2" />
<rect x="730" y="532" width="110" height="22" fill="#d8d1c9" />
<rect x="740" y="528" width="10" height="30" fill="#e2ddd6" />
<rect x="815" y="542" width="7" height="13" fill="#6b4c3a" />
<rect x="730" y="554" width="110" height="72" fill="#bd9566" />
<rect x="730" y="561" width="110" height="2.5" fill="#8a6944" />
<rect x="730" y="573" width="110" height="2.5" fill="#8a6944" />
<rect x="730" y="586" width="110" height="2.5" fill="#8a6944" />
<rect x="730" y="599" width="110" height="2.5" fill="#8a6944" />
<rect x="730" y="612" width="110" height="2.5" fill="#8a6944" />
<path d="M782 511 Q765 512 766 532 Q766 540 768 544 L797 544 Q799 538 799 530 Q799 511 782 511 Z" fill="#2a2523" />
<path d="M782 519 Q768 520 768.5 537 Q770 553 776 558 Q782 561 788 558 Q796 552 797 536 Q797 519 782 519 Z" fill="#cfa593" />
<path d="M740 630 L742 578 Q750 566 772 557 L795 554 Q818 560 832 570 L834 630 Z" fill="#19191b" />
<path d="M774 556 L782 560 L790 556 L794 554 L781 596 L773 558 Z" fill="#ebeae8" />
<path d="M778 567 L785 566 L787 600 L782 630 L773 630 L776 600 Z" fill="#55575b" />
<path d="M776 576 L786 571 M775 586 L787 580 M774 597 L787 590 M773 608 L786 601 M773 619 L785 612" fill="none" stroke="#d8d8d8" stroke-width="1.4" />
</g></g>
<rect x="211" y="112.2" width="103.39999999999998" height="17.4" fill="#232427" rx="3" fill-opacity="0.85"/>
<path d="M218 117.0 Q218 115.5 219.5 115.5 Q221 115.5 221 117.0 L221 121.5 Q221 123.0 219.5 123.0 Q218 123.0 218 121.5 Z" fill="#e3484f" />
<path d="M216.3 120.5 Q216.3 125.0 219.5 125.0 Q222.7 125.0 222.7 120.5 M219.5 125.0 L219.5 128.0" fill="none" stroke="#e3484f" stroke-width="1.2" />
<path d="M214 128.5 L225 116.5" fill="none" stroke="#e3484f" stroke-width="1.3" />
<text x="229.8" y="125.4" font-size="11.7" font-weight="normal" fill="#e6e6e6" text-anchor="start" font-family="Liberation Sans" textLength="80.4" lengthAdjust="spacingAndGlyphs" >Наталя Діденко</text>
<rect x="355.2" y="112.2" width="111.80000000000001" height="17.4" fill="#232427" rx="3" fill-opacity="0.85"/>
<text x="358.3" y="125.4" font-size="11.7" font-weight="normal" fill="#e6e6e6" text-anchor="start" font-family="Liberation Sans" textLength="105" lengthAdjust="spacingAndGlyphs" >Михайло ПІКСАСОВ</text>
<rect x="499.4" y="112.2" width="122.60000000000002" height="17.4" fill="#232427" rx="3" fill-opacity="0.85"/>
<path d="M506.4 117.0 Q506.4 115.5 507.9 115.5 Q509.4 115.5 509.4 117.0 L509.4 121.5 Q509.4 123.0 507.9 123.0 Q506.4 123.0 506.4 121.5 Z" fill="#e3484f" />
<path d="M504.7 120.5 Q504.7 125.0 507.9 125.0 Q511.09999999999997 125.0 511.09999999999997 120.5 M507.9 125.0 L507.9 128.0" fill="none" stroke="#e3484f" stroke-width="1.2" />
<path d="M502.4 128.5 L513.4 116.5" fill="none" stroke="#e3484f" stroke-width="1.3" />
<text x="517.5" y="125.4" font-size="11.7" font-weight="normal" fill="#e6e6e6" text-anchor="start" font-family="Liberation Sans" textLength="100.9" lengthAdjust="spacingAndGlyphs" >Татьяна Плеханова</text>
<rect x="642.6" y="112.2" width="45.799999999999955" height="17.4" fill="#232427" rx="3" fill-opacity="0.85"/>
<path d="M649.6 117.0 Q649.6 115.5 651.1 115.5 Q652.6 115.5 652.6 117.0 L652.6 121.5 Q652.6 123.0 651.1 123.0 Q649.6 123.0 649.6 121.5 Z" fill="#e3484f" />
<path d="M647.9 120.5 Q647.9 125.0 651.1 125.0 Q654.3000000000001 125.0 654.3000000000001 120.5 M651.1 125.0 L651.1 128.0" fill="none" stroke="#e3484f" stroke-width="1.2" />
<path d="M645.6 128.5 L656.6 116.5" fill="none" stroke="#e3484f" stroke-width="1.3" />
<text x="661.6" y="125.4" font-size="11.7" font-weight="normal" fill="#e6e6e6" text-anchor="start" font-family="Liberation Sans" textLength="23.4" lengthAdjust="spacingAndGlyphs" >Oleg</text>
<rect x="786" y="112.2" width="95" height="17.4" fill="#232427" rx="3" fill-opacity="0.85"/>
<path d="M793 117.0 Q793 115.5 794.5 115.5 Q796 115.5 796 117.0 L796 121.5 Q796 123.0 794.5 123.0 Q793 123.0 793 121.5 Z" fill="#e3484f" />
<path d="M791.3 120.5 Q791.3 125.0 794.5 125.0 Q797.7 125.0 797.7 120.5 M794.5 125.0 L794.5 128.0" fill="none" stroke="#e3484f" stroke-width="1.2" />
<path d="M789 128.5 L800 116.5" fill="none" stroke="#e3484f" stroke-width="1.3" />
<text x="806" y="125.4" font-size="11.7" font-weight="normal" fill="#e6e6e6" text-anchor="start" font-family="Liberation Sans" textLength="71.5" lengthAdjust="spacingAndGlyphs" >Ірина Блажко</text>
<rect x="930" y="112.2" width="90" height="17.4" fill="#232427" rx="3" fill-opacity="0.85"/>
<path d="M937 117.0 Q937 115.5 938.5 115.5 Q940 115.5 940 117.0 L940 121.5 Q940 123.0 938.5 123.0 Q937 123.0 937 121.5 Z" fill="#e3484f" />
<path d="M935.3 120.5 Q935.3 125.0 938.5 125.0 Q941.7 125.0 941.7 120.5 M938.5 125.0 L938.5 128.0" fill="none" stroke="#e3484f" stroke-width="1.2" />
<path d="M933 128.5 L944 116.5" fill="none" stroke="#e3484f" stroke-width="1.3" />
<text x="949" y="125.4" font-size="11.7" font-weight="normal" fill="#e6e6e6" text-anchor="start" font-family="Liberation Sans" textLength="67" lengthAdjust="spacingAndGlyphs" >Назар Кінаш</text>
<circle cx="30" cy="612" r="14" fill="#262a2e" />
<path d="M23.5 618.5 L23.8 615 L32 606.8 L35.2 610 L27 618.2 Z M30.3 608.5 L33.5 611.7" fill="none" stroke="#23c47a" stroke-width="1.4" />
<path d="M22.5 620.5 L37 620.5" fill="none" stroke="#23c47a" stroke-width="1.4" />
<path d="M43.5 645.5 Q43.5 642 47 642 Q50.5 642 50.5 645.5 L50.5 652 Q50.5 655.5 47 655.5 Q43.5 655.5 43.5 652 Z" fill="none" stroke="#ffffff" stroke-width="1.3" />
<path d="M40 650.5 Q40 658.5 47 658.5 Q54 658.5 54 650.5 M47 658.5 L47 662 M43 662 L51 662" fill="none" stroke="#ffffff" stroke-width="1.3" />
<path d="M37.5 661.5 L56.5 642" fill="none" stroke="#e8325a" stroke-width="1.8" />
<path d="M72.6 654.3 L75.6 651.0 L78.6 654.3" fill="none" stroke="#e8e8e8" stroke-width="1.4" />
<text x="46.6" y="676.9" font-size="11" font-weight="normal" fill="#ffffff" text-anchor="middle" font-family="Liberation Sans" textLength="23.4" lengthAdjust="spacingAndGlyphs" stroke="#fff" stroke-width="0.4">Звук</text>
<rect x="120" y="646" width="15.5" height="12" fill="none" rx="2.5" stroke="#ffffff" stroke-width="1.4"/>
<path d="M135.5 650 L142 646.5 L142 657.5 L135.5 654" fill="none" stroke="#ffffff" stroke-width="1.4" />
<path d="M160 654.3 L163 651.0 L166 654.3" fill="none" stroke="#e8e8e8" stroke-width="1.4" />
<text x="130.6" y="676.9" font-size="11" font-weight="normal" fill="#ffffff" text-anchor="middle" font-family="Liberation Sans" textLength="31.2" lengthAdjust="spacingAndGlyphs" stroke="#fff" stroke-width="0.4">Видео</text>
<circle cx="424.2" cy="646.8" r="2.3" fill="none" stroke="#ffffff" stroke-width="1.2" />
<circle cx="431" cy="649.2" r="2.1" fill="none" stroke="#ffffff" stroke-width="1.2" />
<path d="M424.5 652.2 L423 652.2 Q419.6 652.2 419.6 655.8 Q419.6 659.4 423 659.4 L424.5 659.4" fill="none" stroke="#ffffff" stroke-width="1.2" />
<rect x="426.2" y="653.5" width="9.2" height="5.9" fill="none" rx="2.9" stroke="#ffffff" stroke-width="1.2"/>
<text x="442.5" y="654" font-size="10" font-weight="normal" fill="#e8e8e8" text-anchor="start" font-family="Liberation Sans" textLength="9.4" lengthAdjust="spacingAndGlyphs" >31</text>
<path d="M471.7 654.3 L474.7 651.0 L477.7 654.3" fill="none" stroke="#e8e8e8" stroke-width="1.4" />
<text x="427.3" y="676.9" font-size="11" font-weight="normal" fill="#ffffff" text-anchor="middle" font-family="Liberation Sans" textLength="52.1" lengthAdjust="spacingAndGlyphs" stroke="#fff" stroke-width="0.4">Участники</text>
<path d="M521 645.5 Q521 642.5 524 642.5 L533 642.5 Q536 642.5 536 645.5 L536 651.5" fill="none" stroke="#ffffff" stroke-width="1.2" />
<path d="M517 649.5 Q517 646.5 520 646.5 L529 646.5 Q532 646.5 532 649.5 L532 655.5 Q532 658.5 529 658.5 L522 658.5 L518.5 661.5 L518.5 658 Q517 657.5 517 655.5 Z" fill="none" stroke="#ffffff" stroke-width="1.2" />
<circle cx="521.5" cy="652.5" r="0.9" fill="#ffffff" />
<circle cx="524.5" cy="652.5" r="0.9" fill="#ffffff" />
<circle cx="527.5" cy="652.5" r="0.9" fill="#ffffff" />
<path d="M553.6 654.3 L556.6 651.0 L559.6 654.3" fill="none" stroke="#e8e8e8" stroke-width="1.4" />
<text x="526.4" y="676.9" font-size="11" font-weight="normal" fill="#ffffff" text-anchor="middle" font-family="Liberation Sans" textLength="17.8" lengthAdjust="spacingAndGlyphs" stroke="#fff" stroke-width="0.4">Чат</text>
<path d="M613 660.5 L604.5 652 Q601.5 648.5 603.5 645.5 Q606 642.2 609.5 643.5 Q611.7 644.5 613 646.5 Q614.3 644.5 616.5 643.5 Q620 642.2 622.5 645.5 Q624.5 648.5 621.5 652 Z" fill="none" stroke="#ffffff" stroke-width="1.3" />
<text x="612.4" y="676.9" font-size="11" font-weight="normal" fill="#ffffff" text-anchor="middle" font-family="Liberation Sans" textLength="76" lengthAdjust="spacingAndGlyphs" stroke="#fff" stroke-width="0.4">Отреагировать</text>
<rect x="691" y="642.8" width="21.8" height="17.2" fill="#22e08a" rx="2.5" />
<path d="M701.9 656 L701.9 648 M697.8 651.5 L701.9 647.2 L706 651.5" fill="none" stroke="#04140a" stroke-width="2" />
<text x="701.4" y="676.9" font-size="11" font-weight="normal" fill="#ffffff" text-anchor="middle" font-family="Liberation Sans" textLength="60.3" lengthAdjust="spacingAndGlyphs" stroke="#fff" stroke-width="0.4">Поделиться</text>
<circle cx="829" cy="652" r="10.5" fill="none" stroke="#ffffff" stroke-width="1.4" />
<circle cx="829" cy="647.5" r="1.1" fill="#ffffff" />
<path d="M829 650.5 L829 657.5" fill="none" stroke="#ffffff" stroke-width="1.6" />
<text x="828.6" y="676.9" font-size="11" font-weight="normal" fill="#ffffff" text-anchor="middle" font-family="Liberation Sans" textLength="150.2" lengthAdjust="spacingAndGlyphs" stroke="#fff" stroke-width="0.4">Информация о конференции</text>
<circle cx="959" cy="652" r="10.5" fill="none" stroke="#ffffff" stroke-width="1.4" />
<circle cx="954.5" cy="652" r="1.2" fill="#ffffff" />
<circle cx="959" cy="652" r="1.2" fill="#ffffff" />
<circle cx="963.5" cy="652" r="1.2" fill="#ffffff" />
<text x="958.5" y="676.9" font-size="11" font-weight="normal" fill="#ffffff" text-anchor="middle" font-family="Liberation Sans" textLength="80.1" lengthAdjust="spacingAndGlyphs" stroke="#fff" stroke-width="0.4">Дополнительно</text>
<path d="M1237 641 L1247.5 641 L1247.5 662 L1237 662" fill="none" stroke="#e8325a" stroke-width="1.4" />
<path d="M1237 641 L1243 644 L1243 662" fill="none" stroke="#e8325a" stroke-width="1.2" />
<circle cx="1233" cy="645" r="2" fill="none" stroke="#ffffff" stroke-width="1.2" />
<path d="M1232.5 648 L1229 652 L1226 651 M1232.5 648 L1234.5 654 L1238 656 M1233 653 L1230 659.5 L1227 661.5 M1234.5 654 L1235.5 661.5" fill="none" stroke="#ffffff" stroke-width="1.3" />
<text x="1236.4" y="676.9" font-size="11" font-weight="normal" fill="#ffffff" text-anchor="middle" font-family="Liberation Sans" textLength="32.7" lengthAdjust="spacingAndGlyphs" stroke="#fff" stroke-width="0.4">Выйти</text>
<rect x="15" y="695.5" width="6.6" height="6.6" fill="#ffffff" />
<rect x="22.2" y="695.5" width="6.6" height="6.6" fill="#ffffff" />
<rect x="15" y="702.7" width="6.6" height="6.6" fill="#ffffff" />
<rect x="22.2" y="702.7" width="6.6" height="6.6" fill="#ffffff" />
<circle cx="64" cy="700.5" r="5.5" fill="none" stroke="#222" stroke-width="1.4" />
<path d="M60 704.5 L55 709.5" fill="none" stroke="#222" stroke-width="1.6" />
<text x="82.8" y="708" font-size="13" font-weight="normal" fill="#3a3a3a" text-anchor="start" font-family="Liberation Sans" textLength="37" lengthAdjust="spacingAndGlyphs" >Поиск</text>
<path d="M260.5 691.5 Q261.7 700.3 270.5 701.5 Q261.7 702.7 260.5 711.5 Q259.3 702.7 250.5 701.5 Q259.3 700.3 260.5 691.5 Z" fill="#f5b81c" />
<path d="M280.5 700.7 Q281.076 704.924 285.3 705.5 Q281.076 706.076 280.5 710.3 Q279.924 706.076 275.7 705.5 Q279.924 704.924 280.5 700.7 Z" fill="#f6c63c" />
<path d="M243 706.8 Q243.384 709.616 246.2 710 Q243.384 710.384 243 713.2 Q242.616 710.384 239.8 710 Q242.616 709.616 243 706.8 Z" fill="#2f8ef0" />
<circle cx="275" cy="693.5" r="1.3" fill="#e8503a" />
<circle cx="291" cy="711" r="1.3" fill="#7ab83a" />
<path d="M316 695 L329 695 M316 708.5 L329 708.5" fill="none" stroke="#d8d8d8" stroke-width="1.3" />
<rect x="317.5" y="698" width="10" height="7.5" fill="none" stroke="#d8d8d8" stroke-width="1.3"/>
<path d="M332 693 L332 710" fill="none" stroke="#d8d8d8" stroke-width="1" />
<circle cx="332" cy="699.5" r="1.3" fill="#d8d8d8" />
<linearGradient id="g_edge" x1="0" y1="1" x2="1" y2="0"><stop offset="0" stop-color="#0b5bb0"/><stop offset="0.55" stop-color="#1a9be0"/><stop offset="1" stop-color="#4fd86a"/></linearGradient>
<circle cx="370.5" cy="702.5" r="10.5" fill="url(#g_edge)" />
<path d="M362 706 Q364 695 374 695 Q381 696 380 702 Q376 699 370 701 Q366 704 368 709 Q372 713 378 711 Q372 715 366 712 Q362 709 362 706 Z" fill="#0e4f9a" />
<circle cx="371" cy="704" r="3.2" fill="#0e63b8" />
<circle cx="416" cy="702" r="10" fill="#1a9fe8" />
<text x="416" y="707.5" font-size="14" font-weight="bold" fill="#ffffff" text-anchor="middle" font-family="Liberation Sans" >S</text>
<rect x="449.5" y="693" width="21" height="19" fill="#f0f0f0" rx="2.5" />
<path d="M455 693 L455 690.5 L465 690.5 L465 693" fill="none" stroke="#3a9ad8" stroke-width="1" />
<rect x="454.5" y="697" width="5.3" height="5.3" fill="#f25022" />
<rect x="460.6" y="697" width="5.3" height="5.3" fill="#7fba00" />
<rect x="454.5" y="703" width="5.3" height="5.3" fill="#00a4ef" />
<rect x="460.6" y="703" width="5.3" height="5.3" fill="#ffb900" />
<rect x="539.5" y="694" width="20" height="17" fill="#f2b84a" rx="1.5" />
<rect x="539.5" y="697" width="20" height="14" fill="#fcd46a" rx="1.5" />
<rect x="544" y="703" width="11" height="6" fill="#3a86d8" />
<rect x="588" y="693" width="17" height="18" fill="#1a6ec2" rx="3" />
<rect x="583" y="697" width="11" height="11" fill="#0f4f9c" rx="2" />
<circle cx="588.5" cy="702.5" r="3" fill="none" stroke="#ffffff" stroke-width="1.5" />
<circle cx="640" cy="697" r="4" fill="#6b6fd0" />
<rect x="630" y="699" width="14" height="13" fill="#5059c9" rx="2" />
<text x="637" y="710" font-size="10" font-weight="bold" fill="#ffffff" text-anchor="middle" font-family="Liberation Sans" >T</text>
<circle cx="646.5" cy="708.5" r="6" fill="#ffffff" stroke="#d0303a" stroke-width="1.6" />
<circle cx="684.5" cy="702" r="10.5" fill="#2aa3e0" />
<path d="M678 701.5 L691 696.5 L688.5 708 L684.5 704.8 L682.5 707 L682.8 703.5 Z" fill="#ffffff" />
<rect x="686" y="705" width="11" height="9" fill="#d9303a" rx="4.5" />
<text x="691.5" y="712.5" font-size="6.5" font-weight="bold" fill="#ffffff" text-anchor="middle" font-family="Liberation Sans" >18</text>
<circle cx="728.5" cy="702" r="10.5" fill="#db4437" />
<path d="M728.5 702 L728.5 691.5 A10.5 10.5 0 0 1 737.6 707.25 Z" fill="#f4c20d" />
<path d="M728.5 702 L737.6 707.25 A10.5 10.5 0 0 1 719.4 707.25 Z" fill="#0f9d58" />
<circle cx="728.5" cy="702" r="4.5" fill="#ffffff" />
<circle cx="728.5" cy="702" r="3.3" fill="#4285f4" />
<circle cx="735" cy="708.5" r="5" fill="#7a6450" />
<rect x="750.8" y="684" width="41.6" height="36" fill="#686868" />
<circle cx="772.5" cy="702" r="11" fill="#1a6ff0" />
<text x="772.5" y="704" font-size="5" font-weight="normal" fill="#ffffff" text-anchor="middle" font-family="Liberation Sans" >zoom</text>
<rect x="620.6" y="718" width="37.39999999999998" height="2" fill="#8ab4e8" />
<rect x="665.5" y="718" width="37.200000000000045" height="2" fill="#8ab4e8" />
<rect x="710.4" y="718" width="37.200000000000045" height="2" fill="#8ab4e8" />
<rect x="752" y="718" width="40.39999999999998" height="2" fill="#8ab4e8" />
<circle cx="929.5" cy="706" r="5" fill="#b4c6ea" />
<circle cx="937.5" cy="701.5" r="7.2" fill="#c6d6f2" />
<rect x="923" y="705" width="22.5" height="7" fill="#b8caec" rx="3.5" />
<circle cx="941.5" cy="694.5" r="4.5" fill="#d8303a" />
<text x="941.5" y="697" font-size="6.5" font-weight="bold" fill="#ffffff" text-anchor="middle" font-family="Liberation Sans" >1</text>
<text x="953" y="708" font-size="13" font-weight="normal" fill="#ffffff" text-anchor="start" font-family="Liberation Sans" textLength="66.3" lengthAdjust="spacingAndGlyphs" >1°C  Cloudy</text>
<path d="M1042 705 L1046 701 L1050 705" fill="none" stroke="#ffffff" stroke-width="1.2" />
<rect x="1062.5" y="695.5" width="5" height="9" fill="#ffffff" rx="2.5" />
<path d="M1065 705 L1065 709 M1061 709 L1069 709" fill="none" stroke="#ffffff" stroke-width="1.2" />
<rect x="1080" y="699" width="12" height="7" fill="none" stroke="#ffffff" stroke-width="1.1"/>
<rect x="1081.5" y="700.5" width="9" height="4" fill="#ffffff" />
<path d="M1100 709 A9 9 0 0 1 1111 698 M1103 709 A6 6 0 0 1 1110 702 M1106 709 A3 3 0 0 1 1109 706" fill="none" stroke="#ffffff" stroke-width="1.1" />
<path d="M1119 700 L1122 700 L1125.5 696.5 L1125.5 708.5 L1122 705 L1119 705 Z" fill="none" stroke="#ffffff" stroke-width="1.1" />
<path d="M1128 699.5 Q1130 702.5 1128 705.5 M1130.5 697.5 Q1133.5 702.5 1130.5 707.5" fill="none" stroke="#ffffff" stroke-width="1" />
<text x="1143" y="707.5" font-size="12" font-weight="normal" fill="#ffffff" text-anchor="start" font-family="Liberation Sans" textLength="18" lengthAdjust="spacingAndGlyphs" >УКР</text>
<text x="1200.7" y="698.8" font-size="12" font-weight="normal" fill="#ffffff" text-anchor="middle" font-family="Liberation Sans" textLength="25.4" lengthAdjust="spacingAndGlyphs" >11:48</text>
<text x="1201.3" y="715.8" font-size="12" font-weight="normal" fill="#ffffff" text-anchor="middle" font-family="Liberation Sans" textLength="51.9" lengthAdjust="spacingAndGlyphs" >19.12.2025</text>
<path d="M1244 696 L1262 696 L1262 708 L1252 708 L1247 712 L1247 708 L1244 708 Z" fill="#ffffff" />
<path d="M1247 699.5 L1259 699.5 M1247 702.5 L1259 702.5" fill="none" stroke="#303030" stroke-width="1" />
<circle cx="1256" cy="711" r="5" fill="#303030" stroke="#ffffff" stroke-width="1" />
<text x="1256" y="714" font-size="7" font-weight="normal" fill="#ffffff" text-anchor="middle" font-family="Liberation Sans" >1</text>
</svg></body></html>
